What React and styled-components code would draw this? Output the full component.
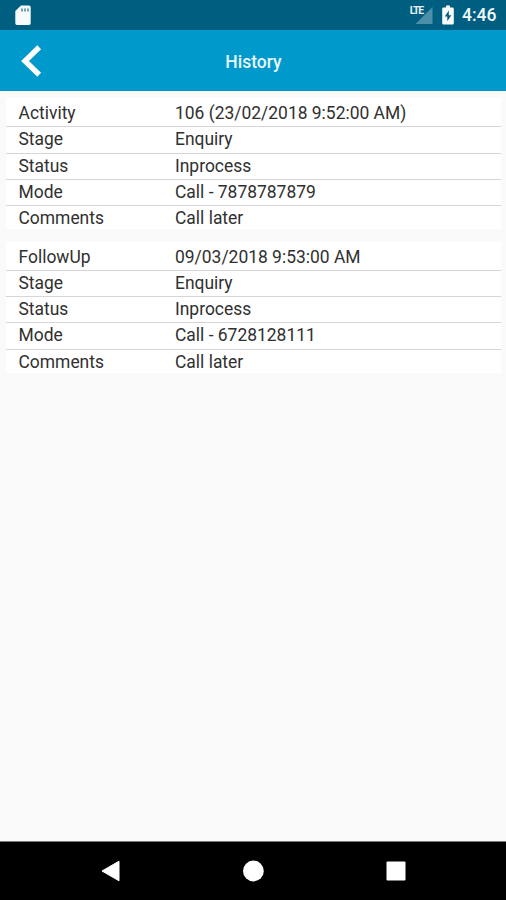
import React from 'react';
import styled, { createGlobalStyle } from 'styled-components';

const colors = {
  statusBar: '#005e80',
  primary: '#0099cc',
  background: '#fafafa',
  divider: '#d6d6d6',
  text: '#303030',
};

const GlobalStyle = createGlobalStyle`
  * {
    box-sizing: border-box;
  }
  body {
    margin: 0;
    font-family: Roboto, sans-serif;
    background-color: ${colors.background};
  }
`;

const Screen = styled.div`
  display: flex;
  flex-direction: column;
  width: 506px;
  height: 900px;
  overflow: hidden;
  background-color: ${colors.background};
`;

const StatusBar = styled.div`
  display: flex;
  justify-content: space-between;
  flex: none;
  height: 30px;
  padding: 0 9px 0 15px;
  background-color: ${colors.statusBar};
`;

const StatusIcons = styled.div`
  display: flex;
  align-items: center;
`;

const Signal = styled.div`
  display: flex;
  align-items: flex-start;
  height: 30px;
  margin-right: 9px;
`;

const NetworkType = styled.span`
  margin: 5px -8px 0 0;
  font-size: 10.5px;
  font-weight: 700;
  line-height: 12px;
  letter-spacing: -1.2px;
  color: #e6f0f4;
  z-index: 1;
`;

const Clock = styled.span`
  width: 35px;
  margin-left: 8px;
  font-size: 17.5px;
  font-weight: 500;
  line-height: 32px;
  white-space: nowrap;
  color: #f2f8fa;
`;

const Toolbar = styled.header`
  display: grid;
  grid-template-columns: 60px 1fr 60px;
  align-items: center;
  flex: none;
  height: 61px;
  background-color: ${colors.primary};
`;

const BackButton = styled.button`
  display: flex;
  padding: 0 0 0 20px;
  border: none;
  background: none;
  cursor: pointer;
`;

const Title = styled.h1`
  margin: 2px 0 0 1px;
  font-size: 17.5px;
  font-weight: 500;
  line-height: 22px;
  text-align: center;
  color: #e9f6fb;
`;

const Content = styled.main`
  display: flex;
  flex-direction: column;
  flex: 1;
  gap: 12.5px;
  padding: 7px 5px 0 6px;
`;

const Card = styled.section`
  padding-top: 3px;
  background-color: white;
`;

const Row = styled.div`
  display: flex;
  height: ${(props) => (props.$isLast ? '23px' : '26.25px')};
  padding-left: 12.5px;
  border-bottom: ${(props) => (props.$isLast ? 'none' : `solid 1px ${colors.divider}`)};
  font-size: 17.45px;
  line-height: 25px;
  color: ${colors.text};
`;

const Label = styled.div`
  width: 156.5px;
`;

const Value = styled.div`
  white-space: nowrap;
`;

const NavBar = styled.nav`
  display: flex;
  justify-content: space-around;
  align-items: center;
  flex: none;
  height: 59px;
  padding: 0 39px;
  border-top: solid 1px #777;
  background-color: black;
`;

const NavButton = styled.button`
  display: flex;
  padding: 0;
  border: none;
  background: none;
  cursor: pointer;
`;

const history = [
  [
    ['Activity', '106 (23/02/2018 9:52:00 AM)'],
    ['Stage', 'Enquiry'],
    ['Status', 'Inprocess'],
    ['Mode', 'Call - 7878787879'],
    ['Comments', 'Call later'],
  ],
  [
    ['FollowUp', '09/03/2018 9:53:00 AM'],
    ['Stage', 'Enquiry'],
    ['Status', 'Inprocess'],
    ['Mode', 'Call - 6728128111'],
    ['Comments', 'Call later'],
  ],
];

const SdCardIcon = () => (
  <svg width="16" height="30" viewBox="0 0 16 30">
    <path
      d="M6 5.5h8a1.7 1.7 0 0 1 1.7 1.7v16a1.7 1.7 0 0 1-1.7 1.7H2a1.7 1.7 0 0 1-1.7-1.7V11z"
      fill="#f8fbfc"
    />
    <path d="M7 8.5v3M10 8.5v3M13 8.5v3" stroke="#4f8ba2" strokeWidth="1.6" />
  </svg>
);

const SignalIcon = () => (
  <svg width="18" height="30" viewBox="0 0 18 30">
    <path d="M17.5 7v17H.5z" fill="#4d8fa8" />
  </svg>
);

const BatteryIcon = () => (
  <svg width="12" height="30" viewBox="0 0 12 30">
    <path
      d="M4 5.5h4v2h2.5q1.3 0 1.3 1.3v14.4q0 1.3-1.3 1.3h-9Q.2 24.5.2 23.2V8.8Q.2 7.5 1.5 7.5H4z"
      fill="#f8fbfc"
    />
    <path d="M6.8 10.5l-4 6h2.5v4.7l4-6H6.8z" fill="#005e80" />
  </svg>
);

const App = () => {
  return (
    <Screen>
      <GlobalStyle />
      <StatusBar>
        <StatusIcons>
          <SdCardIcon />
        </StatusIcons>
        <StatusIcons>
          <Signal>
            <NetworkType>LTE</NetworkType>
            <SignalIcon />
          </Signal>
          <BatteryIcon />
          <Clock>4:46</Clock>
        </StatusIcons>
      </StatusBar>
      <Toolbar>
        <BackButton aria-label="Back">
          <svg width="24" height="34" viewBox="0 0 24 34">
            <path d="M19.2 3.2 5 17l14.2 13.8" fill="none" stroke="white" strokeWidth="5.4" />
          </svg>
        </BackButton>
        <Title>History</Title>
      </Toolbar>
      <Content>
        {history.map((entry, i) => (
          <Card key={i}>
            {entry.map(([label, value], j) => (
              <Row key={label} $isLast={j === entry.length - 1}>
                <Label>{label}</Label>
                <Value>{value}</Value>
              </Row>
            ))}
          </Card>
        ))}
      </Content>
      <NavBar>
        <NavButton aria-label="Back">
          <svg width="20" height="22" viewBox="0 0 20 22">
            <path d="M19 1.2v19.6L2 11z" fill="white" stroke="white" strokeLinejoin="round" />
          </svg>
        </NavButton>
        <NavButton aria-label="Home">
          <svg width="22" height="22" viewBox="0 0 22 22">
            <circle cx="11.4" cy="11" r="10.4" fill="white" />
          </svg>
        </NavButton>
        <NavButton aria-label="Recent apps">
          <svg width="20" height="20" viewBox="0 0 20 20">
            <rect x=".5" y=".5" width="19" height="19" rx="1" fill="white" />
          </svg>
        </NavButton>
      </NavBar>
    </Screen>
  );
};

export default App;
